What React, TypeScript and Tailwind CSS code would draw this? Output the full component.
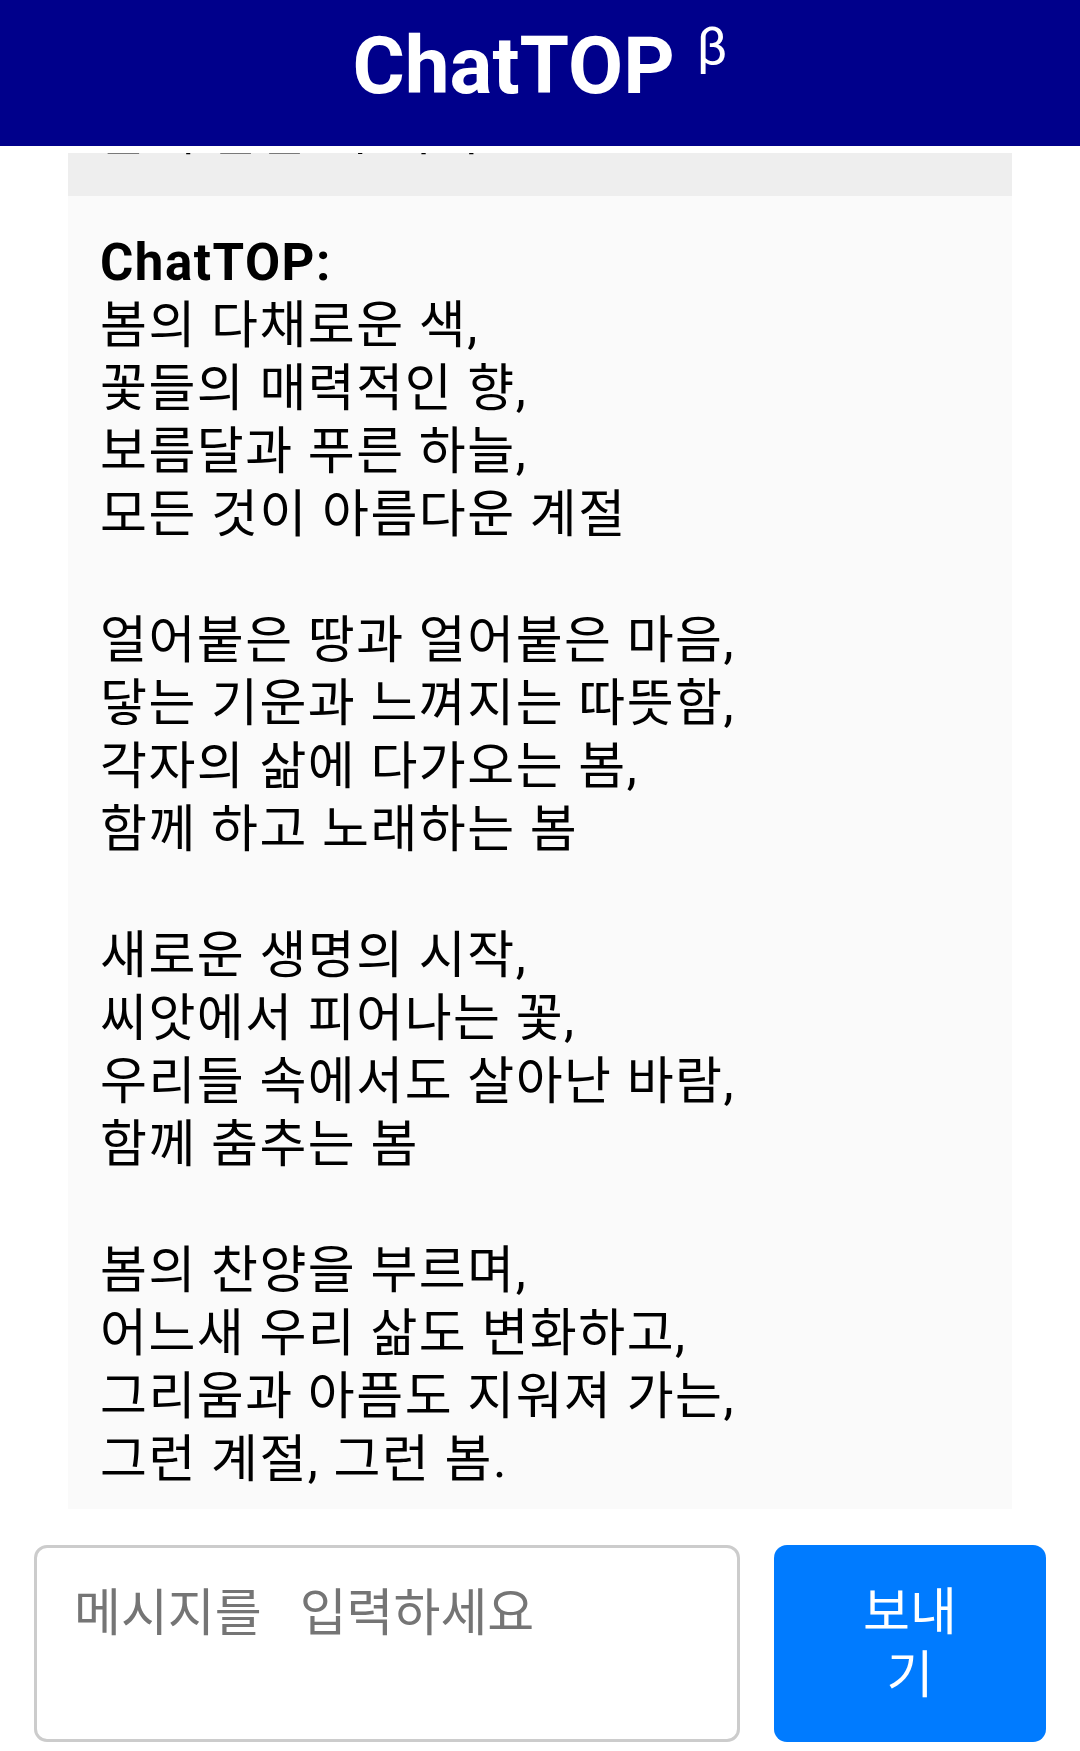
import { useState } from "react";

const poem = `봄의 다채로운 색,
꽃들의 매력적인 향,
보름달과 푸른 하늘,
모든 것이 아름다운 계절

얼어붙은 땅과 얼어붙은 마음,
닿는 기운과 느껴지는 따뜻함,
각자의 삶에 다가오는 봄,
함께 하고 노래하는 봄

새로운 생명의 시작,
씨앗에서 피어나는 꽃,
우리들 속에서도 살아난 바람,
함께 춤추는 봄

봄의 찬양을 부르며,
어느새 우리 삶도 변화하고,
그리움과 아픔도 지워져 가는,
그런 계절, 그런 봄.`;

export default function App() {
    const [message, setMessage] = useState("");

    return (
        <div className="flex h-[1751px] w-[1080px] flex-col bg-white font-[Roboto,'Noto_Sans_CJK_KR',sans-serif] text-black">
            <header className="h-[146px] shrink-0 bg-[#00008b] pt-[26px] text-center">
                <h1 className="text-[80px] leading-[80px] font-bold text-white">
                    ChatTOP
                    <sup className="ml-[22px] -top-[29px] text-[52px] font-normal">β</sup>
                </h1>
            </header>

            {/* chat log, scrolled to the latest message */}
            <div className="mx-[68px] mt-[7px] flex min-h-0 flex-1 flex-col justify-end overflow-hidden">
                <div className="bg-[#eeeeee] px-[32px] pt-[30px] pb-[32px] text-[51px] leading-[63px] tracking-[1.5px]">
                    <b>나:</b>
                    <br />
                    봄에 관한 시 써줘
                </div>
                <div className="bg-[#fafafa] px-[32px] pt-[35px] pb-[18px] text-[51px] leading-[63px] tracking-[1.5px] whitespace-pre-wrap">
                    <b>ChatTOP:</b>
                    <br />
                    {poem}
                </div>
            </div>

            <div className="flex shrink-0 gap-[34px] px-[34px] pt-[36px] pb-[9px]">
                <textarea
                    className="h-[197px] flex-1 resize-none rounded-[13px] border-[3px] border-[#cccccc] bg-white px-[37px] pt-[34px] text-[51px] leading-[63px] placeholder:text-[#757575] focus:outline-none"
                    placeholder="메시지를   입력하세요"
                    value={message}
                    onChange={(e) => setMessage(e.target.value)}
                />
                <button className="h-[197px] w-[272px] shrink-0 rounded-[13px] bg-[#007bff] px-[80px] text-[51px] leading-[63px] text-white">
                    보내기
                </button>
            </div>
        </div>
    );
}
